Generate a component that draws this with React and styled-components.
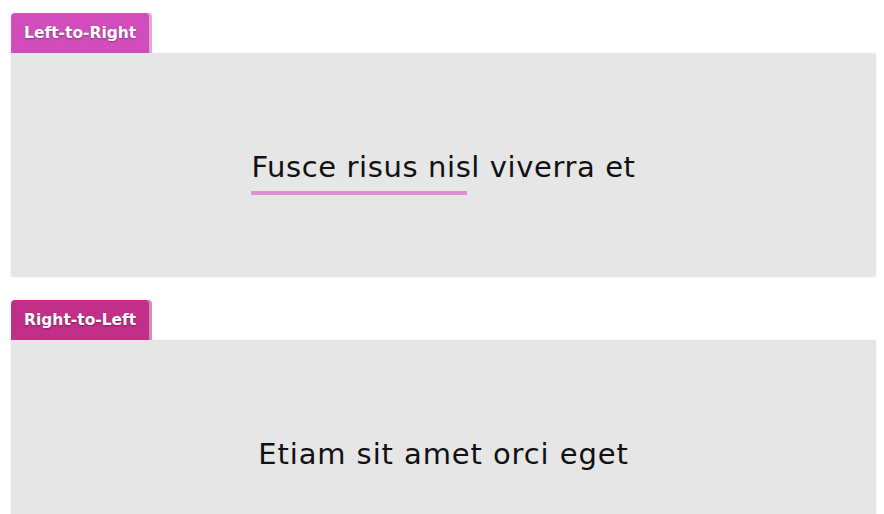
import styled, { createGlobalStyle } from "styled-components";

const GlobalStyle = createGlobalStyle`
	body {
		margin: 0;
		background: #ffffff;
		font-family: "DejaVu Sans", "Open Sans", sans-serif;
	}
`;

const Page = styled.div`
	display: flex;
	flex-direction: column;
	gap: 23px;
	padding: 13px 8px 0 11px;
`;

const Section = styled.section`
	display: flex;
	flex-direction: column;
	align-items: flex-start;
`;

const Tab = styled.div`
	background: ${(p) => p.$color};
	color: #ffffff;
	font-weight: 700;
	font-size: 15.5px;
	height: 40px;
	line-height: 41px;
	padding: 0 13px;
	border-radius: 4px 4px 0 0;
	box-shadow: 3px 0 0 ${(p) => p.$shade};
	text-shadow: 0 1px 2px rgba(0, 0, 0, 0.35);
`;

const Panel = styled.div`
	align-self: stretch;
	height: 224px;
	background: #e6e6e6;
	border-radius: 0 3px 3px 3px;
	box-shadow: 0 0 2px rgba(0, 0, 0, 0.08);
	display: flex;
	align-items: center;
	justify-content: center;
`;

const Title = styled.span`
	position: relative;
	margin-top: 4px;
	font-size: 29px;
	letter-spacing: ${(p) => (p.$wide ? "0.9px" : "0.6px")};
	color: #111111;

	&::after {
		content: "";
		position: absolute;
		height: 4px;
		bottom: -11px;
		width: ${(p) => p.$progress}%;
		background: #e38fcf;
		${(p) => (p.$rtl ? "right: 0;" : "left: 0;")}
	}
`;

const demos = [
	{ label: "Left-to-Right", color: "#d24dbc", shade: "#e3a6d9", text: "Fusce risus nisl viverra et", progress: 56 },
	{ label: "Right-to-Left", color: "#c22f88", shade: "#d88ab9", text: "Etiam sit amet orci eget", progress: 0, rtl: true, wide: true },
];

export default function App() {
	return (
		<>
			<GlobalStyle />
			<Page>
				{demos.map((d) => (
					<Section key={d.label}>
						<Tab $color={d.color} $shade={d.shade}>
							{d.label}
						</Tab>
						<Panel>
							<Title $progress={d.progress} $rtl={d.rtl} $wide={d.wide}>
								{d.text}
							</Title>
						</Panel>
					</Section>
				))}
			</Page>
		</>
	);
}
